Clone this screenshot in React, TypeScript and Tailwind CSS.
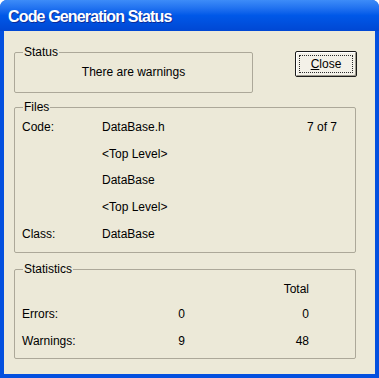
import React from 'react';

const GroupBox = ({ label, className, children }: { label: string; className: string; children: React.ReactNode }) => (
  <fieldset className={`border border-[#aca899] rounded-[2px] px-[7px] ${className}`}>
    <legend className="ml-[1px] px-[1px] leading-[14px]">{label}</legend>
    {children}
  </fieldset>
);

export default function App() {
  const fileRows = [
    { label: 'Code:', value: 'DataBase.h', extra: '7 of 7' },
    { label: '', value: '<Top Level>', extra: '' },
    { label: '', value: 'DataBase', extra: '' },
    { label: '', value: '<Top Level>', extra: '' },
    { label: 'Class:', value: 'DataBase', extra: '' },
  ];

  return (
    <div className="w-[379px] h-[378px] flex flex-col rounded-t-[7px] bg-[#0350df] font-['Liberation_Sans',Arial,sans-serif] text-[12px] text-black">
      {/* title bar */}
      <div className="h-[31px] shrink-0 rounded-t-[7px] bg-linear-to-b from-[#3d8cf8] via-[#0058e8] to-[#0047d3] flex items-center pl-[8px] pt-[2px]">
        <span className="text-white font-bold text-[16px] tracking-[-0.85px] [text-shadow:1px_1px_0_#0a2b9a]">
          Code Generation Status
        </span>
      </div>

      {/* client area */}
      <div className="flex-1 mx-[4px] mb-[4px] bg-[#ece9d8] pt-[14px] pl-[10px] pr-[19px] flex flex-col">
        <div className="flex items-start">
          <GroupBox label="Status" className="w-[239px] h-[48px]">
            <div className="flex justify-center pt-[6px] leading-[14px]">There are warnings</div>
          </GroupBox>
          <button className="ml-auto mr-[-1px] mt-[6px] w-[62px] h-[26px] rounded-[2px] border border-[#1b1b1b] bg-[#f3f1e8] p-[3px] shadow-[inset_1px_1px_0_#ffffff,inset_-1px_-1px_0_#9d9a8c]">
            <span className="flex h-full w-full items-center justify-center border border-dotted border-[#2a2a2a] leading-[14px]">
              <span><span className="underline underline-offset-1">C</span>lose</span>
            </span>
          </button>
        </div>

        <GroupBox label="Files" className="mt-[7px] h-[153px] pr-[18px]">
          <div className="flex flex-col">
            {fileRows.map((r, i) => (
              <div key={i} className="h-[26.6px] flex items-center leading-[14px]">
                <span className="w-[80px]">{r.label}</span>
                <span className="flex-1">{r.value}</span>
                <span>{r.extra}</span>
              </div>
            ))}
          </div>
        </GroupBox>

        <GroupBox label="Statistics" className="mt-[9px] h-[97px]">
          <div className="grid grid-cols-[120px_43px_124px] leading-[14px]">
            <div className="h-[25px] flex items-center"></div>
            <div className="h-[25px]"></div>
            <div className="h-[25px] flex items-center justify-end">Total</div>

            <div className="h-[26px] flex items-center">Errors:</div>
            <div className="h-[26px] flex items-center justify-end">0</div>
            <div className="h-[26px] flex items-center justify-end">0</div>

            <div className="h-[27px] flex items-center">Warnings:</div>
            <div className="h-[27px] flex items-center justify-end">9</div>
            <div className="h-[27px] flex items-center justify-end">48</div>
          </div>
        </GroupBox>
      </div>
    </div>
  );
}
